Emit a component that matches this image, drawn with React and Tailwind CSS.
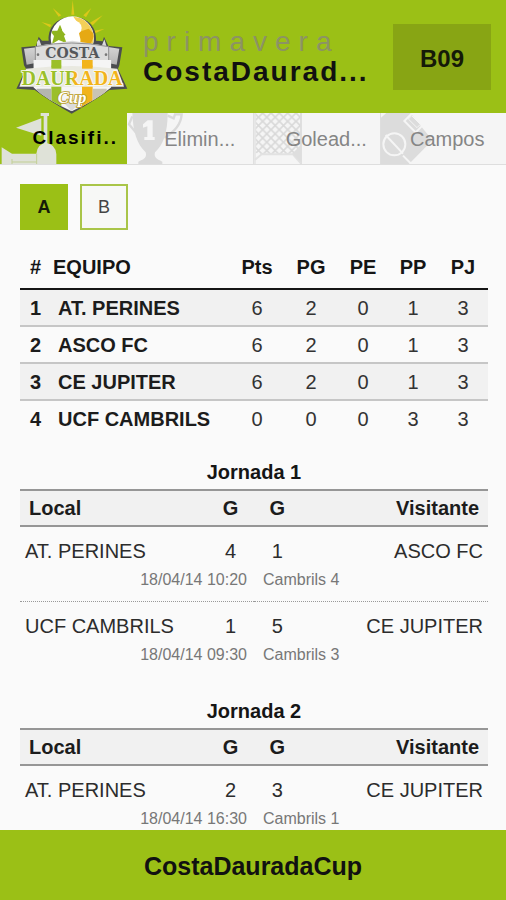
const STANDINGS = [
  { pos: 1, team: "AT. PERINES", stats: [6, 2, 0, 1, 3] },
  { pos: 2, team: "ASCO FC", stats: [6, 2, 0, 1, 3] },
  { pos: 3, team: "CE JUPITER", stats: [6, 2, 0, 1, 3] },
  { pos: 4, team: "UCF CAMBRILS", stats: [0, 0, 0, 3, 3] },
];

const ROUNDS = [
  {
    name: "Jornada 1",
    matches: [
      { home: "AT. PERINES", hg: 4, ag: 1, away: "ASCO FC", date: "18/04/14 10:20", place: "Cambrils 4" },
      { home: "UCF CAMBRILS", hg: 1, ag: 5, away: "CE JUPITER", date: "18/04/14 09:30", place: "Cambrils 3" },
    ],
  },
  {
    name: "Jornada 2",
    matches: [
      { home: "AT. PERINES", hg: 2, ag: 3, away: "CE JUPITER", date: "18/04/14 16:30", place: "Cambrils 1" },
    ],
  },
];

function Logo() {
  return (
    <svg viewBox="0 0 429 360" className="relative z-10 h-[120px] w-[143px] shrink-0 self-start" role="img" aria-label="Costa Daurada Cup">
      <defs>
        <linearGradient id="ribbon" x1="0" x2="0" y1="0" y2="1">
          <stop offset="0" stopColor="#e2e2e2" />
          <stop offset="1" stopColor="#b4b4b4" />
        </linearGradient>
        <linearGradient id="name" x1="0" x2="1">
          <stop offset="0.48" stopColor="#9bbf2a" />
          <stop offset="0.52" stopColor="#f2b41c" />
        </linearGradient>
        <clipPath id="ball"><circle cx="217" cy="114" r="64" /></clipPath>
        <clipPath id="shield"><path d="M100 180H334V262Q290 300 215 334Q140 300 100 262Z" /></clipPath>
      </defs>
      <g fill="#dcc81a">
        <path d="M214 44L218 0L223 44Z" />
        <path d="M176 50L158 24L184 46Z" />
        <path d="M250 46L274 24L258 52Z" />
        <path d="M270 68L308 46L278 76Z" />
        <path d="M284 92L314 86L286 100Z" />
        <path d="M150 82L124 66L154 74Z" />
      </g>
      <path d="M146 122C140 26 294 26 288 122L308 124L312 110L325 138L367 142L358 196L354 206L382 266L328 270Q280 304 215 341Q150 304 104 270L49 266L78 206L72 196L64 142L108 138L116 110L126 122Z" fill="#4b4d50" />
      <circle cx="217" cy="114" r="65" fill="#fff" />
      <g clipPath="url(#ball)">
        <path d="M217 46H290V180H232Q248 150 240 126Q250 96 238 76Z" fill="#f4cf58" />
        <path d="M236 96L266 86L284 104L272 132L244 128Z" fill="#e6a914" />
        <path d="M180 74L188 92L206 92L192 108L200 130L176 120L156 132L162 108L150 92L172 92Z" fill="#8fb51f" />
        <ellipse cx="215" cy="84" rx="30" ry="24" fill="#fff" />
        <path d="M196 134L218 122L238 134V160H196Z" fill="#fff" />
      </g>
      <path d="M111 126L117 118L124 136L217 122L306 136L313 118L320 140L358 146L350 194Q215 164 80 194L72 146L111 142Z" fill="url(#ribbon)" />
      <path d="M106 140Q215 118 326 140V190Q215 170 106 190Z" fill="#dcdcdc" stroke="#8f8f8f" strokeWidth="3" />
      <g clipPath="url(#shield)">
        <rect x="90" y="180" width="250" height="160" fill="#f5f5f5" />
        <path d="M154 180H184V340H154Z" fill="#9bbf2a" />
        <path d="M246 180H278V340H246Z" fill="#f2b41c" />
        <path d="M110 266H154V300H110Z" fill="#b4b6b0" />
        <path d="M278 266H320V300H278Z" fill="#c9c4b4" />
        <path d="M184 300L215 334L246 300Z" fill="#dadada" />
      </g>
      <path d="M78 206Q215 190 352 206L372 260H58Z" fill="#e9e9e0" />
      <path d="M154 197H184V206H154Z" fill="#9bbf2a" />
      <path d="M246 197H278V206H246Z" fill="#f2b41c" />
      <text x="217" y="174" textAnchor="middle" fontFamily="'DejaVu Serif', serif" fontWeight="700" fontSize="42" fill="#55575a">COSTA</text>
      <text x="216" y="254" textAnchor="middle" fontFamily="'Liberation Serif', serif" fontWeight="700" fontSize="60" fill="url(#name)" stroke="#fbfbf4" strokeWidth="5" paintOrder="stroke">DAURADA</text>
      <text x="216" y="308" textAnchor="middle" fontFamily="'Liberation Serif', serif" fontStyle="italic" fontWeight="700" fontSize="50" fill="#fff" stroke="#b99a1c" strokeWidth="5" paintOrder="stroke">Cup</text>
      <circle cx="114" cy="164" r="4" fill="#777" />
      <circle cx="318" cy="164" r="4" fill="#777" />
    </svg>
  );
}

const ICON = "absolute bottom-0 left-0 h-[51px] w-[60px]";

function FlagIcon() {
  return (
    <svg viewBox="0 0 180 153" className={ICON} aria-hidden="true" fill="#dfe2d8">
      <path d="M122 0H147V9H142V100H131V9H122Z" />
      <path d="M48 44L124 16V68Z" />
      <path d="M5 103L36 122H109Q112 92 139 90Q167 94 169 124V153H5Z" />
      <path d="M36 138V153M36 147H109M110 122V153" stroke="#c2cf95" strokeWidth="3" />
    </svg>
  );
}

function TrophyIcon() {
  return (
    <svg viewBox="0 0 180 153" className={ICON} aria-hidden="true">
      <path d="M16 0H122C122 60 108 96 84 118C80 132 88 138 106 146V153H34V146C54 138 60 132 56 118C30 94 18 56 16 0Z" fill="#dadada" />
      <path d="M122 8L140 16L144 4H164C162 34 140 58 112 74" fill="none" stroke="#dadada" strokeWidth="7" />
      <path d="M16 10L6 34L30 62" fill="none" stroke="#dadada" strokeWidth="7" />
      <path d="M62 22H77V72H83V81H52V72H61V40L48 44V34Z" fill="#f5f5f5" />
    </svg>
  );
}

function NetIcon() {
  return (
    <svg viewBox="0 0 180 153" className={ICON} aria-hidden="true">
      <defs>
        <pattern id="net" x="4" width="25" height="25" patternUnits="userSpaceOnUse">
          <path d="M-2 -2L27 27M27 -2L-2 27" stroke="#d9d9d9" strokeWidth="5" fill="none" />
        </pattern>
      </defs>
      <path d="M8 0H142V100L120 124H24L8 120Z" fill="url(#net)" />
      <path d="M2 0V153M6 0V153" stroke="#dcdcdc" strokeWidth="3" />
      <path d="M144 0V153" stroke="#dadada" strokeWidth="5" />
      <path d="M6 140L26 124H120L143 150" fill="none" stroke="#e2e2e2" strokeWidth="6" />
      <path d="M118 122L143 96V148Z" fill="#dedede" />
    </svg>
  );
}

function PitchIcon() {
  return (
    <svg viewBox="0 0 180 153" className={ICON} aria-hidden="true">
      <path d="M0 14L16 0H88L154 82L84 153H0Z" fill="#dcdcdc" />
      <g fill="none" stroke="#f5f5f5" strokeWidth="6">
        <circle cx="40" cy="94" r="33" />
        <path d="M14 66L66 122M66 128L94 156" />
        <path d="M92 2L70 24L104 58L128 34" />
      </g>
      <path d="M92 8L118 34L108 44L82 18Z" fill="#dcdcdc" stroke="#f5f5f5" strokeWidth="3" />
    </svg>
  );
}

const TABS = [
  { label: "Clasifi..", Icon: FlagIcon, style: "bg-[#9bc016] pl-6 text-[19px] font-bold tracking-[2px] text-black" },
  { label: "Elimin...", Icon: TrophyIcon, style: "bg-[#f5f5f5] pl-5 text-xl text-[#858585]" },
  { label: "Golead...", Icon: NetIcon, style: "bg-[#f5f5f5] pl-5 text-xl text-[#858585]" },
  { label: "Campos", Icon: PitchIcon, style: "border-l border-[#dedede] bg-[#f5f5f5] pl-2 text-xl text-[#858585]" },
];

function Standings() {
  return (
    <table className="mt-4 w-full table-fixed border-separate border-spacing-0 text-xl text-[#1c1c1c]">
      <thead>
        <tr className="h-11 text-[#151515]">
          <th scope="col" className="w-[33px] border-b-2 border-[#151515] p-0 pl-[10px] text-left">#</th>
          <th scope="col" className="border-b-2 border-[#151515] p-0 text-left">EQUIPO</th>
          <th scope="col" className="w-[54px] border-b-2 border-[#151515] p-0">Pts</th>
          <th scope="col" className="w-[54px] border-b-2 border-[#151515] p-0">PG</th>
          <th scope="col" className="w-[50px] border-b-2 border-[#151515] p-0">PE</th>
          <th scope="col" className="w-[50px] border-b-2 border-[#151515] p-0">PP</th>
          <th scope="col" className="w-[50px] border-b-2 border-[#151515] p-0">PJ</th>
        </tr>
      </thead>
      <tbody>
        {STANDINGS.map((row) => (
          <tr key={row.pos} className="group h-[37px] odd:bg-[#f1f1f1]">
            <td className="border-b-2 border-[#c6c6c6] p-0 pl-[10px] font-bold group-last:border-transparent">{row.pos}</td>
            <th scope="row" className="border-b-2 border-[#c6c6c6] p-0 pl-[5px] text-left group-last:border-transparent">{row.team}</th>
            {row.stats.map((n, i) => (
              <td key={i} className="border-b-2 border-[#c6c6c6] p-0 text-center text-[#333] group-last:border-transparent">{n}</td>
            ))}
          </tr>
        ))}
      </tbody>
    </table>
  );
}

function Round({ name, matches }) {
  return (
    <section className="pt-[17px]">
      <h2 className="text-center text-xl leading-[34px] font-bold text-[#151515]">{name}</h2>
      <table className="w-full table-fixed border-separate border-spacing-0 text-xl text-[#2c2c2c]">
        <thead>
          <tr className="h-[38px] bg-[#f1f1f1] text-[#1c1c1c]">
            <th scope="col" className="w-2/5 border-y-2 border-[#969696] p-0 pl-[9px] text-left">Local</th>
            <th scope="col" className="w-1/10 border-y-2 border-[#969696] p-0">G</th>
            <th scope="col" className="w-1/10 border-y-2 border-[#969696] p-0">G</th>
            <th scope="col" className="w-2/5 border-y-2 border-[#969696] p-0 pr-[9px] text-right">Visitante</th>
          </tr>
        </thead>
        {matches.map((m) => (
          <tbody key={m.date} className="group">
            <tr className="leading-7">
              <td className="p-0 pt-[10px] pl-[5px]">{m.home}</td>
              <td className="p-0 pt-[10px] text-center">{m.hg}</td>
              <td className="p-0 pt-[10px] text-center">{m.ag}</td>
              <td className="p-0 pt-[10px] pr-[5px] text-right">{m.away}</td>
            </tr>
            <tr className="text-base leading-[30px] text-[#777]">
              <td colSpan={2} className="border-b border-dotted border-[#999] p-0 pr-[7px] pb-[6px] text-right group-last:border-transparent">{m.date}</td>
              <td colSpan={2} className="border-b border-dotted border-[#999] p-0 pb-[6px] pl-[9px] group-last:border-transparent">{m.place}</td>
            </tr>
          </tbody>
        ))}
      </table>
    </section>
  );
}

export default function App() {
  return (
    <div className="flex h-screen flex-col overflow-hidden bg-[#fafafa] font-['Liberation_Sans',Arial,sans-serif]">
      <header className="flex h-[113px] shrink-0 items-center bg-[#9bc016] pr-[15px]">
        <Logo />
        <div className="min-w-0 flex-1 text-[28px] leading-[30px] whitespace-nowrap">
          <p className="tracking-[8px] text-[#8c9364]">primavera</p>
          <h1 className="font-bold tracking-[2px] text-[#111]">CostaDaurad...</h1>
        </div>
        <button type="button" className="h-[66px] w-[98px] shrink-0 bg-[#88a514] pt-1 text-2xl font-bold text-[#151a08]">B09</button>
      </header>

      <nav className="grid h-[52px] shrink-0 grid-cols-4 border-b border-[#dedede]">
        {TABS.map(({ label, Icon, style }) => (
          <button key={label} type="button" className={`relative overflow-hidden whitespace-nowrap ${style}`}>
            <Icon />
            <span className="relative">{label}</span>
          </button>
        ))}
      </nav>

      <main className="min-h-0 flex-1 overflow-hidden pt-[19px] pr-[18px] pl-5">
        <div className="flex gap-3">
          <button type="button" className="h-[46px] w-12 border-2 border-[#9bc016] bg-[#9bc016] text-lg font-bold text-[#151a08]">A</button>
          <button type="button" className="h-[46px] w-12 border-2 border-[#a9c548] bg-[#f7f8f6] text-lg text-[#444]">B</button>
        </div>
        <Standings />
        {ROUNDS.map((round) => (
          <Round key={round.name} {...round} />
        ))}
      </main>

      <footer className="flex h-[70px] shrink-0 items-center justify-center bg-[#9bc016] pt-1 text-[25px] font-bold text-[#111]">
        CostaDauradaCup
      </footer>
    </div>
  );
}
